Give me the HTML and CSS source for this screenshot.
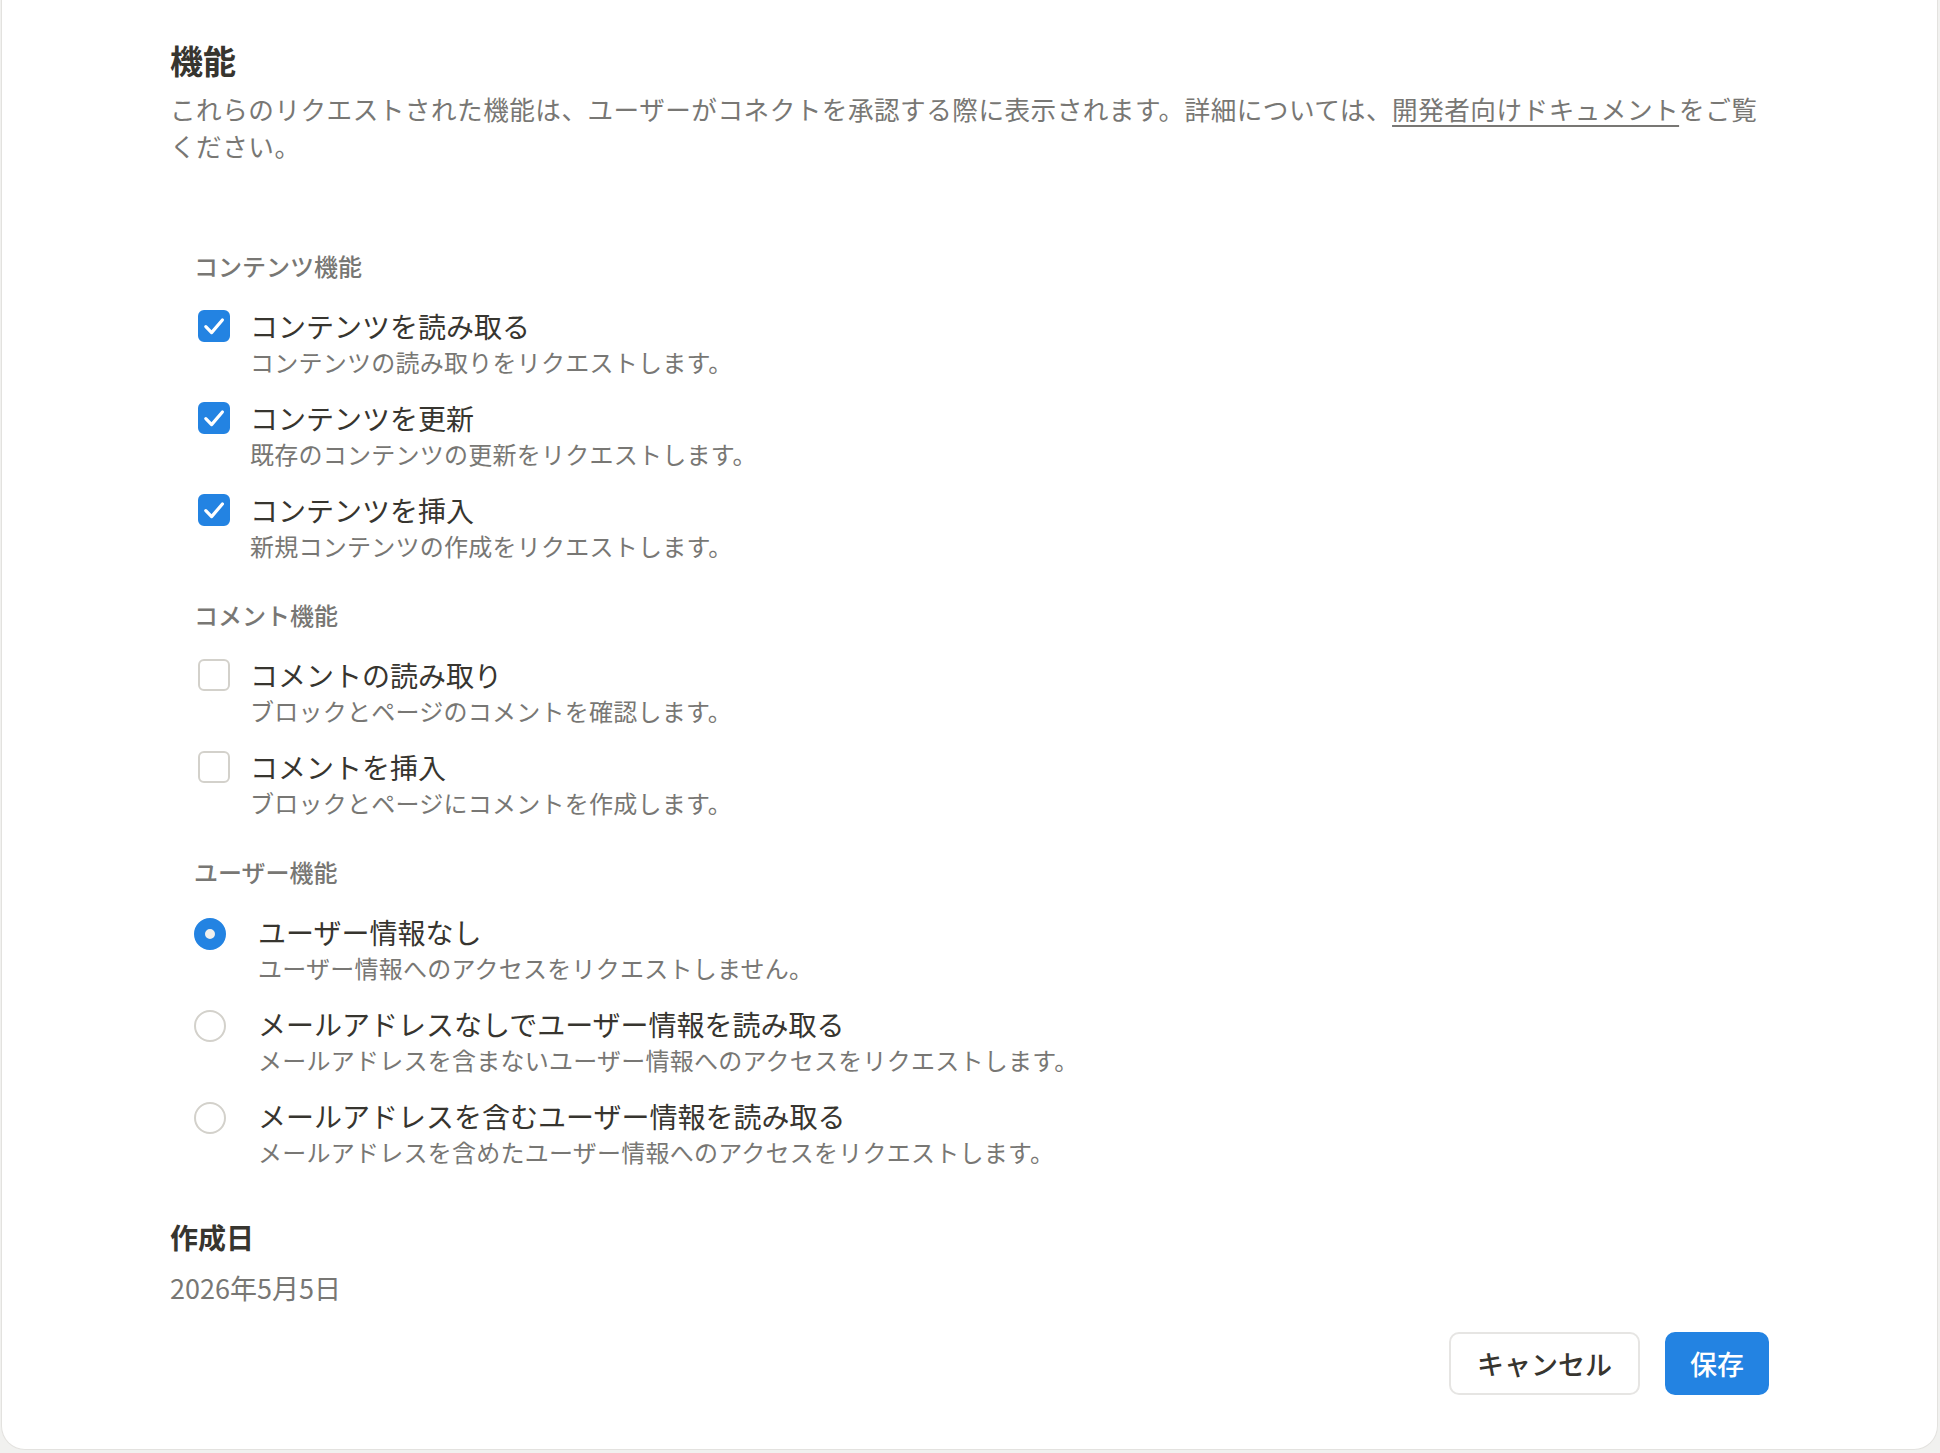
FILE: index.html
```html
<!DOCTYPE html>
<html lang="ja">

<head>
    <meta charset="utf-8">
    <title>機能</title>
    <meta name="viewport" content="width=device-width, initial-scale=1.0">
    <link rel="stylesheet" href="styles.css">
</head>

<body>
    <div class="card">
        <div class="content">
            <h2 class="title">機能</h2>
            <p class="desc">これらのリクエストされた機能は、ユーザーがコネクトを承認する際に表示されます。詳細については、<a href="#">開発者向けドキュメント</a>をご覧ください。</p>

            <div class="group first">
                <div class="group-title">コンテンツ機能</div>
                <label class="item">
                    <span class="check on"><svg viewBox="0 0 16 16"><path d="M3.9 8.3l2.9 3L12.2 5" /></svg></span>
                    <span class="text">
                        <span class="label">コンテンツを読み取る</span>
                        <span class="sub">コンテンツの読み取りをリクエストします。</span>
                    </span>
                </label>
                <label class="item">
                    <span class="check on"><svg viewBox="0 0 16 16"><path d="M3.9 8.3l2.9 3L12.2 5" /></svg></span>
                    <span class="text">
                        <span class="label">コンテンツを更新</span>
                        <span class="sub">既存のコンテンツの更新をリクエストします。</span>
                    </span>
                </label>
                <label class="item">
                    <span class="check on"><svg viewBox="0 0 16 16"><path d="M3.9 8.3l2.9 3L12.2 5" /></svg></span>
                    <span class="text">
                        <span class="label">コンテンツを挿入</span>
                        <span class="sub">新規コンテンツの作成をリクエストします。</span>
                    </span>
                </label>
            </div>

            <div class="group">
                <div class="group-title">コメント機能</div>
                <label class="item">
                    <span class="check"></span>
                    <span class="text">
                        <span class="label">コメントの読み取り</span>
                        <span class="sub">ブロックとページのコメントを確認します。</span>
                    </span>
                </label>
                <label class="item">
                    <span class="check"></span>
                    <span class="text">
                        <span class="label">コメントを挿入</span>
                        <span class="sub">ブロックとページにコメントを作成します。</span>
                    </span>
                </label>
            </div>

            <div class="group radios">
                <div class="group-title">ユーザー機能</div>
                <label class="item radio-item">
                    <span class="radio on"></span>
                    <span class="text">
                        <span class="label">ユーザー情報なし</span>
                        <span class="sub">ユーザー情報へのアクセスをリクエストしません。</span>
                    </span>
                </label>
                <label class="item radio-item">
                    <span class="radio"></span>
                    <span class="text">
                        <span class="label">メールアドレスなしでユーザー情報を読み取る</span>
                        <span class="sub">メールアドレスを含まないユーザー情報へのアクセスをリクエストします。</span>
                    </span>
                </label>
                <label class="item radio-item">
                    <span class="radio"></span>
                    <span class="text">
                        <span class="label">メールアドレスを含むユーザー情報を読み取る</span>
                        <span class="sub">メールアドレスを含めたユーザー情報へのアクセスをリクエストします。</span>
                    </span>
                </label>
            </div>

            <div class="created">
                <div class="created-title">作成日</div>
                <div class="created-date">2026年5月5日</div>
            </div>

            <div class="actions">
                <button class="btn">キャンセル</button>
                <button class="btn primary">保存</button>
            </div>
        </div>
    </div>
</body>

</html>
```

FILE: styles.css
```css
html,
body {
    margin: 0;
    padding: 0;
    background-color: #f1f1ef;
}

* {
    box-sizing: border-box;
}

body {
    font-family: "Noto Sans CJK JP", "Noto Sans", sans-serif;
    color: #37352f;
    height: 1453px;
    overflow: hidden;
}

.card {
    background-color: #fff;
    border: 1px solid #e3e2df;
    border-top: none;
    border-radius: 0 0 24px 24px;
    margin: 0 2px 0 1px;
    padding: 38px 0 54px;
}

.content {
    width: 1599px;
    margin-left: 168px;
}

.title {
    margin: 0;
    font-size: 33px;
    line-height: 44px;
    font-weight: 700;
}

.desc {
    margin: 8px 0 0;
    font-size: 25.6px;
    line-height: 37px;
    letter-spacing: 0.5px;
    color: #787774;
}

.desc a {
    color: #787774;
    text-decoration: underline;
    text-underline-offset: 5px;
    text-decoration-thickness: 1.5px;
}

.group {
    margin-top: 35px;
    padding-left: 24px;
}

.group.first {
    margin-top: 85px;
}

.group-title {
    font-size: 24px;
    line-height: 34px;
    font-weight: 500;
    color: #787774;
    margin-bottom: 24px;
}

.item {
    display: flex;
    align-items: flex-start;
    gap: 20px;
    margin-bottom: 20px;
    padding-left: 4px;
}

.item:last-child {
    margin-bottom: 0;
}

.text {
    display: flex;
    flex-direction: column;
}

.label {
    font-size: 28px;
    line-height: 38px;
}

.sub {
    font-size: 24px;
    line-height: 34px;
    letter-spacing: 0.25px;
    color: #787774;
}

.check {
    flex: none;
    width: 32px;
    height: 32px;
    margin-top: 3px;
    border: 2px solid #d3d1cb;
    border-radius: 6px;
    display: flex;
    align-items: center;
    justify-content: center;
}

.check.on {
    background-color: #2383e2;
    border-color: #2383e2;
}

.check svg {
    width: 32px;
    height: 32px;
    flex: none;
    fill: none;
    stroke: #fff;
    stroke-width: 1.6;
    stroke-linecap: round;
    stroke-linejoin: round;
}

.radio-item {
    gap: 32px;
    padding-left: 0;
}

.radio {
    flex: none;
    width: 32px;
    height: 32px;
    margin-top: 5px;
    border: 2px solid #d3d1cb;
    border-radius: 50%;
}

.radio.on {
    border: 11px solid #2383e2;
    background-color: #f0f0ee;
}

.created {
    margin-top: 50px;
}

.created-title {
    font-size: 28px;
    line-height: 36px;
    font-weight: 700;
}

.created-date {
    margin-top: 15px;
    font-size: 27px;
    line-height: 36px;
    color: #787774;
}

.actions {
    display: flex;
    justify-content: flex-end;
    gap: 25px;
    margin-top: 26px;
}

.btn {
    font-family: inherit;
    height: 63px;
    padding: 0 26px;
    font-size: 27px;
    font-weight: 500;
    color: #37352f;
    background-color: #fff;
    border: 2px solid #e6e5e3;
    border-radius: 10px;
    cursor: pointer;
}

.btn.primary {
    padding: 0 23px;
    color: #fff;
    background-color: #2383e2;
    border-color: #2383e2;
}
```
